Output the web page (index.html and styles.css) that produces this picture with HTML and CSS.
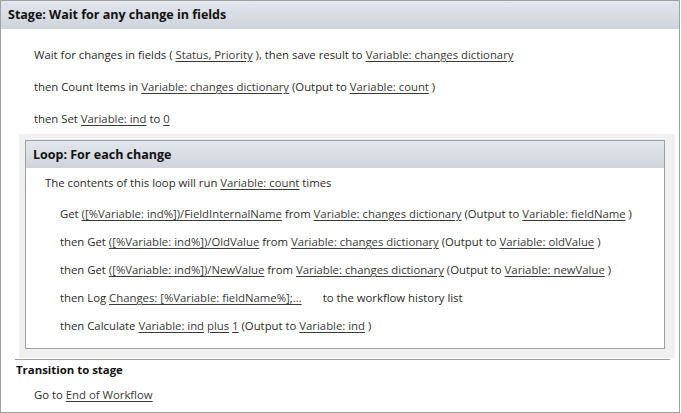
FILE: index.html
```html
<!DOCTYPE html>
<html>
<head>
<meta charset="utf-8">
<link rel="stylesheet" href="styles.css">
</head>
<body>
<div class="stage">
  <div class="stage-header">Stage: Wait for any change in fields</div>
  <div class="stage-body">
    <div class="row">Wait for changes in fields ( <a>Status, Priority</a> ), then save result to <a>Variable: changes dictionary</a></div>
    <div class="row">then Count Items in <a>Variable: changes dictionary</a> (Output to <a>Variable: count</a> )</div>
    <div class="row">then Set <a>Variable: ind</a> to <a>0</a></div>
    <div class="loop-band">
      <div class="loop">
        <div class="loop-header">Loop: For each change</div>
        <div class="loop-body">
          <div class="loop-intro">The contents of this loop will run <a>Variable: count</a> times</div>
          <div class="lrow">Get <a>([%Variable: ind%])/FieldInternalName</a> from <a>Variable: changes dictionary</a> (Output to <a>Variable: fieldName</a> )</div>
          <div class="lrow">then Get <a>([%Variable: ind%])/OldValue</a> from <a>Variable: changes dictionary</a> (Output to <a>Variable: oldValue</a> )</div>
          <div class="lrow">then Get <a>([%Variable: ind%])/NewValue</a> from <a>Variable: changes dictionary</a> (Output to <a>Variable: newValue</a> )</div>
          <div class="lrow">then Log <a>Changes: [%Variable: fieldName%];...</a> <span class="gap"></span>to the workflow history list</div>
          <div class="lrow">then Calculate <a>Variable: ind</a> <a>plus</a> <a>1</a> (Output to <a>Variable: ind</a> )</div>
        </div>
      </div>
    </div>
    <div class="transition">
      <div class="transition-title">Transition to stage</div>
      <div class="trow">Go to <a>End of Workflow</a></div>
    </div>
  </div>
</div>
</body>
</html>
```
FILE: styles.css
```css
html, body {
  margin: 0;
  padding: 0;
  background: #ffffff;
}
body {
  font-family: "Open Sans", "Noto Sans", sans-serif;
  font-size: 11.33px;
  color: #2a2a2a;
}
a {
  color: #3a3a3a;
  text-decoration: underline;
  text-underline-offset: 2px;
}
.stage {
  width: 678px;
  height: 411px;
  border: 1px solid #a0a0a0;
  display: flex;
  flex-direction: column;
}
.stage-header {
  height: 28px;
  line-height: 28px;
  padding-left: 7px;
  font-weight: bold;
  font-size: 12.5px;
  color: #111;
  background: linear-gradient(#e2e6ec, #cfd4dc);
}
.stage-body {
  padding-top: 10px;
  display: flex;
  flex-direction: column;
}
.row {
  height: 32px;
  line-height: 32px;
  padding-left: 33px;
  white-space: nowrap;
}
.loop-band {
  margin: -1px 4px 0 18px;
  padding: 6px 10px 9px 6px;
  background: #f0f0f0;
}
.loop {
  border: 1px solid #a0a0a0;
  background: #fff;
}
.loop-header {
  height: 27px;
  line-height: 28px;
  padding-left: 7px;
  font-weight: bold;
  font-size: 12.5px;
  color: #111;
  background: linear-gradient(#e2e6ec, #cfd4dc);
}
.loop-body {
  padding: 2px 0 8px 0;
}
.loop-intro {
  height: 26px;
  line-height: 26px;
  padding-left: 19px;
  margin-bottom: 4px;
  white-space: nowrap;
}
.lrow {
  height: 28px;
  line-height: 28px;
  padding-left: 34px;
  white-space: nowrap;
}
.gap {
  display: inline-block;
  width: 18px;
}
.transition {
  margin: 1px 9px 0 14px;
  border-top: 1px solid #a0a0a0;
}
.transition-title {
  height: 20px;
  line-height: 20px;
  padding-left: 1px;
  font-weight: bold;
  font-size: 11.4px;
  color: #111;
}
.trow {
  margin-top: 3px;
  height: 24px;
  line-height: 24px;
  padding-left: 19px;
}
```
